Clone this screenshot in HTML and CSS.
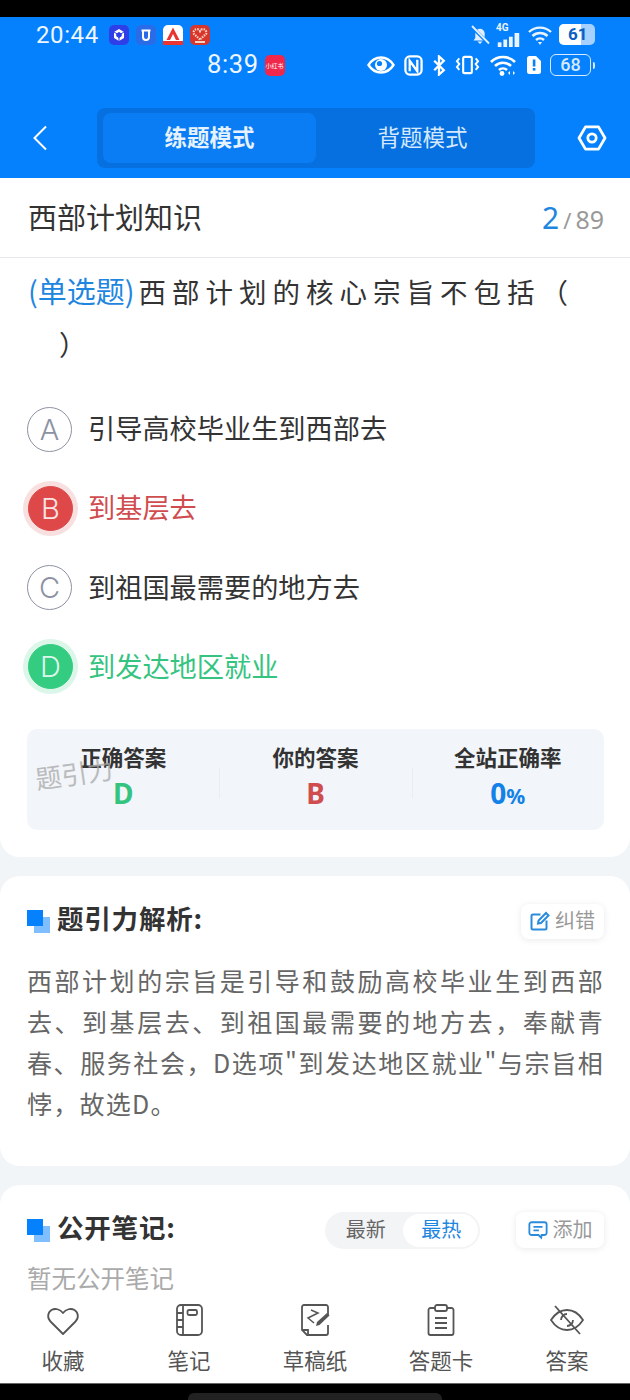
FILE: index.html
```html
<!DOCTYPE html>
<html lang="zh">
<head>
<meta charset="utf-8">
<title>题引力</title>
<link rel="stylesheet" href="styles.css">
</head>
<body>
<div class="screen">
  <div class="blackbar"></div>
  <header class="hero">
    <div class="status first">
      <span class="time">20:44</span>
      <span class="apps">
        <svg class="app" viewBox="0 0 20 20"><rect width="20" height="20" rx="5" fill="#2f3fe8"/><path d="M10 4l5 3v6l-5 3-5-3V7z" fill="#fff"/><path d="M10 7.500l2.200 1.300v2.400L10 12.500l-2.200-1.300V8.800zM5 7l5 3M15 7l-5 3M10 16v-6" fill="#2f3fe8" stroke="#2f3fe8" stroke-width="1"/></svg>
        <svg class="app" viewBox="0 0 20 20"><rect width="20" height="20" rx="5" fill="#2a6be8"/><path d="M5.500 5.500h9M7 5.500v6.500a3 3 0 0 0 6 0V5.500" fill="none" stroke="#fff" stroke-width="2"/></svg>
        <svg class="app" viewBox="0 0 20 20"><rect width="20" height="20" rx="5" fill="#fff"/><path d="M10 2.500l6.500 12.500h-3.500L10 9l-3 6H3.500z" fill="#e9342f"/><rect y="16" width="20" height="4" fill="#e9342f"/></svg>
        <svg class="app" viewBox="0 0 20 20"><rect width="20" height="20" rx="5" fill="#d8362c"/><path d="M10 14.500L4 9a3.300 3.300 0 0 1 6-3 3.300 3.300 0 0 1 6 3z" fill="none" stroke="#f6d2c0" stroke-width="2.200" stroke-dasharray="1.500 1"/><rect x="5" y="16" width="10" height="2" fill="#f6d2c0"/></svg>
      </span>
      <span class="spacer"></span>
      <svg class="ic bell" viewBox="0 0 20 20"><path d="M3.500 15.500h13l-1.800-2.600V8.500a4.700 4.700 0 0 0-9.400 0v4.400zM7.500 16.500h5L10 19z" fill="#e2efff"/><path d="M1.500 1.500l17 17" stroke="#0681fd" stroke-width="3.400"/><path d="M2 1l17 17.500" stroke="#e2efff" stroke-width="1.800"/></svg>
      <span class="signal"><span class="four">4G</span><svg viewBox="0 0 25 15"><g fill="#eaf4ff"><rect x="1" y="10" width="4" height="5"/><rect x="7" y="7" width="4" height="8"/><rect x="13" y="4" width="4" height="11"/><rect x="19" y="0" width="5" height="15"/></g></svg></span>
      <svg class="ic wifi-a" viewBox="0 0 26 20"><path d="M2 7a16 16 0 0 1 22 0M5.500 11a11 11 0 0 1 15 0M9 15a6 6 0 0 1 8 0" fill="none" stroke="#eaf4ff" stroke-width="2.400"/><path d="M11 17h4l-2 3z" fill="#eaf4ff"/></svg>
      <span class="batt-a"><span class="batt-a-fill">61</span></span>
    </div>
    <div class="status second">
      <span class="time second-time">8:39</span>
      <span class="xhs">小红书</span>
      <span class="spacer"></span>
      <svg class="ic eye" viewBox="0 0 28 20"><path d="M1.500 10C5 4.500 9 2.500 14 2.500S23 4.500 26.500 10C23 15.500 19 17.500 14 17.500S5 15.500 1.500 10z" fill="none" stroke="#fff" stroke-width="2.400"/><circle cx="14" cy="10" r="6" fill="#fff"/><circle cx="12.500" cy="8.500" r="2.600" fill="#0681fd"/></svg>
      <svg class="ic nfc" viewBox="0 0 20 22"><rect x="1.500" y="1.500" width="17" height="19" rx="4.500" fill="none" stroke="#fff" stroke-width="2.400"/><path d="M6 17V6l8 11V5" fill="none" stroke="#fff" stroke-width="2.400"/></svg>
      <svg class="ic bt" viewBox="0 0 14 22"><path d="M2 6l10 10-5 4.500V1.500l5 4.500L2 16" fill="none" stroke="#fff" stroke-width="2.400"/></svg>
      <svg class="ic vib" viewBox="0 0 26 20"><rect x="8.500" y="1.500" width="9" height="17" rx="1.500" fill="none" stroke="#fff" stroke-width="2.200"/><path d="M4.500 3L2 6l2.500 3L2 12l2.500 3M21.500 3L24 6l-2.500 3 2.500 3-2.500 3" fill="none" stroke="#fff" stroke-width="2"/></svg>
      <svg class="ic wifi-b" viewBox="0 0 28 22"><path d="M2 8a17 17 0 0 1 24 0M6 12a11.500 11.500 0 0 1 16 0M10 16a6 6 0 0 1 8 0" fill="none" stroke="#fff" stroke-width="2.600"/><circle cx="13" cy="19.500" r="2.400" fill="#fff"/><path d="M21 17v4l-2-2zM24 17v4l2-2z" fill="#fff"/></svg>
      <svg class="ic sim" viewBox="0 0 16 20"><path d="M1 3.500A2.500 2.500 0 0 1 3.500 1H10l5 5v10.500a2.500 2.500 0 0 1-2.500 2.500h-9A2.500 2.500 0 0 1 1 16.500z" fill="#fff"/><rect x="6.800" y="4.500" width="2.600" height="7" fill="#0681fd"/><rect x="6.800" y="13" width="2.600" height="2.600" fill="#0681fd"/></svg>
      <span class="batt-b">68</span><span class="batt-tip"></span>
    </div>
    <nav class="nav">
      <svg class="back" viewBox="0 0 16 26"><path d="M14 1.500L2.500 13 14 24.500" fill="none" stroke="#fff" stroke-width="2"/></svg>
      <div class="modes">
        <span class="mode active">练题模式</span>
        <span class="mode">背题模式</span>
      </div>
      <svg class="hex" viewBox="0 0 32 28"><path d="M9 2h14l7 12-7 12H9L2 14z" fill="none" stroke="#fff" stroke-width="3" stroke-linejoin="round"/><circle cx="16" cy="14" r="4.500" fill="none" stroke="#fff" stroke-width="3"/></svg>
    </nav>
  </header>

  <main class="main">
    <section class="card question">
      <div class="titlebar">
        <h1 class="title">西部计划知识</h1>
        <div class="count"><b>2</b><i>/</i><span>89</span></div>
      </div>
      <p class="stem"><span class="kind">(单选题)</span><span class="stem-text">西部计划的核心宗旨不包括（<br><span class="close">）</span></span></p>
      <ul class="options">
        <li class="option"><span class="letter">A</span><span class="opt-text">引导高校毕业生到西部去</span></li>
        <li class="option wrong"><span class="letter">B</span><span class="opt-text">到基层去</span></li>
        <li class="option"><span class="letter">C</span><span class="opt-text">到祖国最需要的地方去</span></li>
        <li class="option right"><span class="letter">D</span><span class="opt-text">到发达地区就业</span></li>
      </ul>
      <div class="stats">
        <span class="mark">题引力</span>
        <div class="stat"><b>正确答案</b><strong class="green">D</strong></div>
        <div class="stat"><b>你的答案</b><strong class="red">B</strong></div>
        <div class="stat"><b>全站正确率</b><strong class="blue">0<small>%</small></strong></div>
      </div>
    </section>

    <section class="card analysis">
      <div class="sect-head">
        <span class="squares"></span>
        <h2 class="sect-title">题引力解析:</h2>
        <span class="spacer"></span>
        <button class="mini"><svg viewBox="0 0 20 20"><path d="M16.500 9.500V17a1.500 1.500 0 0 1-1.500 1.500H3A1.500 1.500 0 0 1 1.500 17V5A1.500 1.500 0 0 1 3 3.500h7.500" fill="none" stroke="#2a8bdc" stroke-width="2"/><path d="M8 12.500l.6-3L16 2l2.500 2.500L11 12z" fill="none" stroke="#2a8bdc" stroke-width="2"/></svg><span class="mini-text">纠错</span></button>
      </div>
      <p class="explain">西部计划的宗旨是引导和鼓励高校毕业生到西部去、到基层去、到祖国最需要的地方去，奉献青春、服务社会，D选项"到发达地区就业"与宗旨相悖，故选D。</p>
    </section>

    <section class="card notes">
      <div class="sect-head">
        <span class="squares"></span>
        <h2 class="sect-title">公开笔记:</h2>
        <span class="spacer"></span>
        <div class="seg"><span class="seg-item">最新</span><span class="seg-item on">最热</span></div>
        <button class="mini add"><svg viewBox="0 0 22 20"><path d="M4 1.500h14A2.500 2.500 0 0 1 20.500 4v9a2.500 2.500 0 0 1-2.500 2.500h-3l-.5 3-3-3H4A2.500 2.500 0 0 1 1.500 13V4A2.500 2.500 0 0 1 4 1.500z" fill="none" stroke="#2a8bdc" stroke-width="2"/><path d="M6 6.500h10M6 10.500h6" stroke="#2a8bdc" stroke-width="2"/></svg><span class="mini-text">添加</span></button>
      </div>
      <p class="empty">暂无公开笔记</p>
    </section>
  </main>

  <footer class="tabs">
    <div class="tab"><svg viewBox="0 0 34 34"><path d="M17 31L4.500 18.500C1 15 1.500 9.500 5.500 7c3.500-2 8.500-1 11.500 3 3-4 8-5 11.500-3 4 2.500 4.500 8 1 11.500z" fill="none" stroke="#555" stroke-width="1.800" stroke-linejoin="round"/></svg><span>收藏</span></div>
    <div class="tab"><svg viewBox="0 0 34 34"><rect x="5" y="2" width="25" height="30" rx="4" fill="none" stroke="#555" stroke-width="1.800"/><path d="M11 2v30M5 10h6M5 17h6M5 24h6" fill="none" stroke="#555" stroke-width="1.800"/><rect x="15.500" y="7" width="9.500" height="5" rx="1.500" fill="none" stroke="#555" stroke-width="1.800"/></svg><span>笔记</span></div>
    <div class="tab"><svg viewBox="0 0 34 34"><path d="M30 13V4a2 2 0 0 0-2-2H6a2 2 0 0 0-2 2v23l5 5h19a2 2 0 0 0 2-2v-8" fill="none" stroke="#555" stroke-width="1.800"/><path d="M10 32v-5H4" fill="none" stroke="#555" stroke-width="1.800"/><path d="M13 7l7 3-10 5 6 5" fill="none" stroke="#555" stroke-width="1.500"/><path d="M18 23l1-4 10-9 2.500 2.500-10 9.500z" fill="#555"/></svg><span>草稿纸</span></div>
    <div class="tab"><svg viewBox="0 0 34 34"><path d="M11 5H6.500a2 2 0 0 0-2 2v23a2 2 0 0 0 2 2h21a2 2 0 0 0 2-2V7a2 2 0 0 0-2-2H23" fill="none" stroke="#555" stroke-width="1.800"/><rect x="11" y="2" width="12" height="6" rx="2" fill="none" stroke="#555" stroke-width="1.800"/><path d="M11 15h12M11 20h12M11 25h12" stroke="#555" stroke-width="1.800"/></svg><span>答题卡</span></div>
    <div class="tab"><svg viewBox="0 0 34 34"><path d="M1 17C5.500 10 10.500 7 17 7s11.500 3 16 10c-4.500 7-9.500 10-16 10S5.500 24 1 17z" fill="none" stroke="#555" stroke-width="1.800"/><path d="M11 17a6 6 0 0 1 6-6M23 17a6 6 0 0 1-6 6" fill="none" stroke="#555" stroke-width="1.800"/><path d="M5 3l25 28" stroke="#555" stroke-width="1.800"/></svg><span>答案</span></div>
  </footer>
  <div class="homebar"><span class="pill"></span></div>
</div>
</body>
</html>
```
FILE: styles.css
```css
* { box-sizing: border-box; }
html, body { margin: 0; padding: 0; }
body { background: #000; font-family: "Noto Sans CJK SC", "Noto Sans", sans-serif; }
h1, h2, p, ul { margin: 0; padding: 0; }
li { list-style: none; }

.screen { width: 630px; height: 1400px; display: flex; flex-direction: column; overflow: hidden; background: #f2f5f8; }
.blackbar { height: 17px; flex: none; background: #000; }

.hero { height: 161px; flex: none; background: #0681fd; color: #fff; }
.status { display: flex; align-items: center; }
.first { height: 34px; padding: 1px 35px 0 36px; }
.second { height: 28px; padding: 0 35px 0 207px; }
.time { font: 400 24px/1 Roboto, sans-serif; letter-spacing: .6px; color: #eef6ff; }
.second-time { font-size: 25.500px; margin-right: 6px; }
.apps { display: flex; gap: 7px; margin-left: 10px; }
.app { width: 20px; height: 20px; flex: none; }
.xhs { width: 20px; height: 21px; flex: none; border-radius: 5px; background: #f0264a; color: #fff; font-size: 6px; line-height: 21px; text-align: center; white-space: nowrap; overflow: hidden; }
.spacer { flex: 1; }
.ic { flex: none; display: block; }
.bell { width: 20px; height: 20px; margin-right: 6px; }
.signal { width: 25px; height: 24px; display: flex; flex-direction: column; margin-right: 6px; }
.four { font: 700 10px/10px Roboto, sans-serif; color: #eaf4ff; }
.signal svg { width: 25px; height: 14px; }
.wifi-a { width: 26px; height: 20px; margin-right: 6px; }
.batt-a { width: 36px; height: 21px; border-radius: 5px; background: #a5d0ff; overflow: hidden; display: block; }
.batt-a-fill { display: block; width: 22px; height: 21px; background: #fff; color: #0a5fc0; font: 700 17px/21px Roboto, sans-serif; padding-left: 9px; white-space: nowrap; }
.eye { width: 28px; height: 20px; margin-right: 9px; }
.nfc { width: 19px; height: 21px; margin-right: 9px; }
.bt { width: 14px; height: 21px; margin-right: 9px; }
.vib { width: 25px; height: 20px; margin-right: 9px; }
.wifi-b { width: 28px; height: 22px; margin-right: 9px; }
.sim { width: 16px; height: 20px; margin-right: 8px; }
.batt-b { width: 41px; height: 22px; border: 1.500px solid #d8eaff; border-radius: 6px; font: 500 18px/19px Roboto, sans-serif; text-align: center; color: #d8eaff; }
.batt-tip { width: 2px; height: 7px; background: #d8eaff; margin-left: 2px; border-radius: 0 2px 2px 0; }

.nav { display: flex; align-items: center; padding: 29px 23px 0 32px; }
.back { width: 16px; height: 26px; flex: none; }
.modes { width: 438px; height: 60px; flex: none; margin-left: 49px; margin-right: 42px; padding: 5px 6px; display: flex; background: #0670e0; border-radius: 8px; }
.mode { flex: 1; display: flex; align-items: center; justify-content: center; font-size: 22.500px; color: #d4e8ff; border-radius: 8px; padding-bottom: 4px; }
.mode.active { background: #0a7df5; color: #e6f2ff; font-weight: 700; }
.hex { width: 30px; height: 26px; flex: none; }

.main { flex: 1; min-height: 0; overflow: hidden; display: flex; flex-direction: column; gap: 19px; }
.card { background: #fff; border-radius: 20px; flex: none; }
.question { height: 679px; border-radius: 0 0 20px 20px; padding: 0 26px 0 27px; }
.titlebar { height: 80px; margin: 0 -26px 0 -27px; padding: 0 26px 4px 28px; display: flex; align-items: center; justify-content: space-between; border-bottom: 1px solid #e6e8eb; }
.title { font-size: 29px; font-weight: 400; color: #333; }
.count { display: flex; align-items: baseline; color: #999; font: 400 25px/1 "Noto Sans", sans-serif; padding-top: 4px; }
.count b { font-weight: 400; font-size: 30px; color: #1f86e0; margin-right: 4px; }
.count i { font-style: normal; font-size: 22px; margin-right: 4px; }
.stem { margin-top: 6px; padding-left: 1px; font-size: 27.500px; line-height: 52px; color: #333; }
.kind { color: #1f86e0; font-size: 29px; margin-right: 4px; }
.stem-text { letter-spacing: 6px; }
.close { margin-left: 31px; }
.options { margin-top: 37px; display: flex; flex-direction: column; gap: 33.300px; }
.option { height: 46px; display: flex; align-items: center; gap: 16px; font-size: 27.200px; color: #333; }
.opt-text { padding-bottom: 4px; }
.letter { width: 45px; height: 45px; flex: none; border-radius: 50%; border: 1.500px solid #8d92a3; color: #8d92a3; display: flex; align-items: center; justify-content: center; font: 300 29px/1 Inter, sans-serif; }
.wrong { color: #d04d4f; }
.right { color: #35c47f; }
.wrong .letter { margin-left: 1px; margin-right: -1px; background: #de4848; border-color: #de4848; color: #f8e4e4; box-shadow: 0 0 0 5px #f8e0e0; }
.right .letter { margin-left: 1px; margin-right: -1px; background: #33cc80; border-color: #33cc80; color: #def7ea; box-shadow: 0 0 0 5px #dcf6e9; }

.stats { position: relative; margin-top: 39px; height: 101px; background: #f2f5f9; border-radius: 10px; display: grid; grid-template-columns: repeat(3, 1fr); padding-top: 12px; }
.mark { position: absolute; left: 8px; top: 31px; font-size: 26px; line-height: 1; color: #a8a8a8; opacity: .75; transform: rotate(-8deg); }
.stat { display: flex; flex-direction: column; align-items: center; }
.stat + .stat { background: linear-gradient(#e9edf2, #e9edf2) left 27px / 1px 30px no-repeat; }
.stat b { font-size: 21.500px; line-height: 32px; font-weight: 700; color: #333; }
.stat strong { font: 700 28px/40px "Noto Sans", sans-serif; }
.stat small { font-size: 21px; }
.green { color: #35c47f; }
.red { color: #d04d4f; }
.blue { color: #1281e8; }

.analysis { height: 290px; padding: 27px 26px 0 27px; }
.sect-head { display: flex; align-items: center; height: 36px; }
.squares { position: relative; width: 23px; height: 23px; margin-right: 7px; flex: none; }
.squares::before { content: ""; position: absolute; left: 7px; top: 7px; width: 16px; height: 16px; background: #7fbfff; }
.squares::after { content: ""; position: absolute; left: 0; top: 0; width: 16px; height: 16px; background: #0681fd; }
.sect-title { font-size: 26.500px; line-height: 30px; font-weight: 700; color: #333; letter-spacing: .8px; margin-bottom: 6px; }
.mini { width: 83px; height: 35px; padding: 0; border: 0; border-radius: 8px; background: #fff; box-shadow: 0 1px 7px rgba(0,0,0,.09); display: flex; align-items: center; justify-content: center; gap: 5px; font: 400 20px/1 "Noto Sans CJK SC", sans-serif; color: #999; }
.mini svg { width: 20px; height: 20px; flex: none; }
.mini-text { padding-bottom: 3px; }
.explain { margin-top: 21px; font-size: 25px; line-height: 41px; letter-spacing: 1.250px; color: #666; text-align: justify; }

.notes { height: 140px; padding: 27px 26px 0 27px; }
.seg { width: 155px; height: 37px; background: #f3f4f5; border-radius: 19px; padding: 2px; display: flex; margin-right: 36px; }
.seg-item { flex: 1; display: flex; align-items: center; justify-content: center; font-size: 20px; color: #666; border-radius: 17px; padding: 0 0 3px 2px; }
.seg-item.on { background: #fff; color: #1f86e0; }
.add { width: 88px; height: 36px; }
.empty { margin-top: 12px; font-size: 24.500px; line-height: 36px; color: #aaa; }

.tabs { height: 83px; flex: none; background: #fff; display: flex; margin-top: -2px; position: relative; }
.tab { flex: 1; display: flex; flex-direction: column; align-items: center; font-size: 21.500px; color: #555; padding-top: 3px; }
.tab svg { width: 34px; height: 34px; margin-bottom: 8px; }
.tab span { line-height: 30px; }
.homebar { height: 17px; flex: none; background: #000; border-top: 1px solid #666; position: relative; }
.pill { position: absolute; left: 188px; top: 9px; width: 254px; height: 12px; border-radius: 6px; background: #222; }
```
